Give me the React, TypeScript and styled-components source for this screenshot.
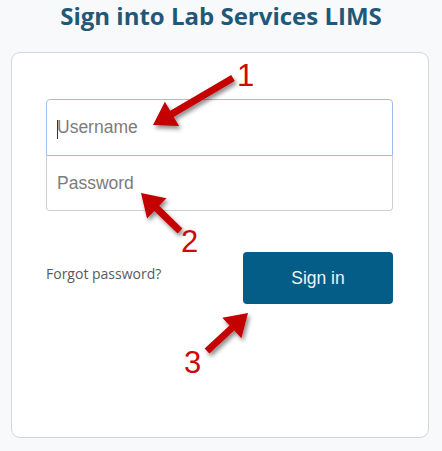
import React from "react";
import styled, { createGlobalStyle } from "styled-components";

const Global = createGlobalStyle`
  html, body { margin: 0; padding: 0; background: #f8f9fb; }
  body { font-family: "Liberation Sans", Arial, sans-serif; }
  * { box-sizing: border-box; }
`;

const Page = styled.div`
  position: relative;
  width: 442px;
  height: 451px;
  overflow: hidden;
  background: #f8f9fb;
`;

const Title = styled.h1`
  margin: 0;
  height: 40px;
  line-height: 31px;
  text-align: center;
  font-family: "Open Sans", sans-serif;
  font-weight: 700;
  font-size: 24px;
  color: #1f5878;
  letter-spacing: 0;
`;

const Card = styled.div`
  margin: 12px 0 0 11px;
  width: 418px;
  height: 386px;
  background: #ffffff;
  border: 1px solid #d6d6d6;
  border-radius: 9px;
  padding: 46px 35px 0 34px;
  display: flex;
  flex-direction: column;
`;

const InputGroup = styled.div`
  display: flex;
  flex-direction: column;
`;

const FieldBox = styled.div<{ $focused?: boolean; $first?: boolean }>`
  position: relative;
  height: ${(p) => (p.$first ? "57px" : "55px")};
  border: 1px solid ${(p) => (p.$focused ? "#9fbdf2" : "#cfcfcf")};
  border-top: ${(p) => (p.$first ? undefined : "none")};
  border-radius: ${(p) => (p.$first ? "4px 4px 0 0" : "0 0 4px 4px")};
  display: flex;
  align-items: center;
`;

const Input = styled.input`
  border: none;
  outline: none;
  background: transparent;
  width: 100%;
  height: 100%;
  padding: 0 10px;
  font-family: "Liberation Sans", Arial, sans-serif;
  font-size: 17.5px;
  color: #333;
  &::placeholder {
    color: #7c7c7c;
    opacity: 1;
  }
`;

const Caret = styled.span`
  position: absolute;
  left: 10px;
  top: 20px;
  width: 1px;
  height: 19px;
  background: #333;
`;

const Actions = styled.div`
  margin-top: 41px;
  display: flex;
  align-items: center;
  justify-content: space-between;
`;

const Forgot = styled.a`
  font-family: "Open Sans", sans-serif;
  font-size: 14px;
  color: #555b60;
  text-decoration: none;
  margin-bottom: 9px;
`;

const SignIn = styled.button`
  width: 150px;
  height: 52px;
  border: none;
  border-radius: 4px;
  background: #035d87;
  color: #eef4f8;
  font-family: "Liberation Sans", Arial, sans-serif;
  font-size: 17.5px;
  cursor: pointer;
`;

const Overlay = styled.svg`
  position: absolute;
  left: 0;
  top: 0;
  width: 442px;
  height: 451px;
  pointer-events: none;
`;

const Num = styled.text`
  font-family: "Liberation Sans", Arial, sans-serif;
  font-size: 31px;
  fill: #cc0a0a;
`;

type Pt = [number, number];

function arrowPoints(tail: Pt, tip: Pt, w = 7, hl = 22, hw = 28): string {
  const dx = tip[0] - tail[0];
  const dy = tip[1] - tail[1];
  const len = Math.hypot(dx, dy);
  const ux = dx / len;
  const uy = dy / len;
  const nx = -uy;
  const ny = ux;
  const bx = tip[0] - ux * hl;
  const by = tip[1] - uy * hl;
  const pts: Pt[] = [
    [tail[0] + (nx * w) / 2, tail[1] + (ny * w) / 2],
    [bx + (nx * w) / 2, by + (ny * w) / 2],
    [bx + (nx * hw) / 2, by + (ny * hw) / 2],
    tip,
    [bx - (nx * hw) / 2, by - (ny * hw) / 2],
    [bx - (nx * w) / 2, by - (ny * w) / 2],
    [tail[0] - (nx * w) / 2, tail[1] - (ny * w) / 2],
  ];
  return pts.map((p) => `${p[0].toFixed(1)},${p[1].toFixed(1)}`).join(" ");
}

const arrows: { tail: Pt; tip: Pt; label: string; lx: number; ly: number }[] = [
  { tail: [233, 78], tip: [153, 125], label: "1", lx: 237, ly: 86 },
  { tail: [180, 231], tip: [141, 193], label: "2", lx: 181, ly: 252 },
  { tail: [207, 351], tip: [248, 313], label: "3", lx: 184, ly: 373 },
];

export default function App() {
  return (
    <Page>
      <Global />
      <Title>Sign into Lab Services LIMS</Title>
      <Card>
        <InputGroup>
          <FieldBox $first $focused>
            <Input placeholder="Username" />
            <Caret />
          </FieldBox>
          <FieldBox>
            <Input type="password" placeholder="Password" />
          </FieldBox>
        </InputGroup>
        <Actions>
          <Forgot href="#">Forgot password?</Forgot>
          <SignIn>Sign in</SignIn>
        </Actions>
      </Card>
      <Overlay viewBox="0 0 442 451">
        <defs>
          <filter id="shadow" x="-30%" y="-30%" width="160%" height="160%">
            <feDropShadow dx="2" dy="3" stdDeviation="2" floodColor="#000" floodOpacity="0.45" />
          </filter>
        </defs>
        {arrows.map((a) => (
          <g key={a.label}>
            <polygon points={arrowPoints(a.tail, a.tip)} fill="#c40000" filter="url(#shadow)" />
            <Num x={a.lx} y={a.ly}>
              {a.label}
            </Num>
          </g>
        ))}
      </Overlay>
    </Page>
  );
}
